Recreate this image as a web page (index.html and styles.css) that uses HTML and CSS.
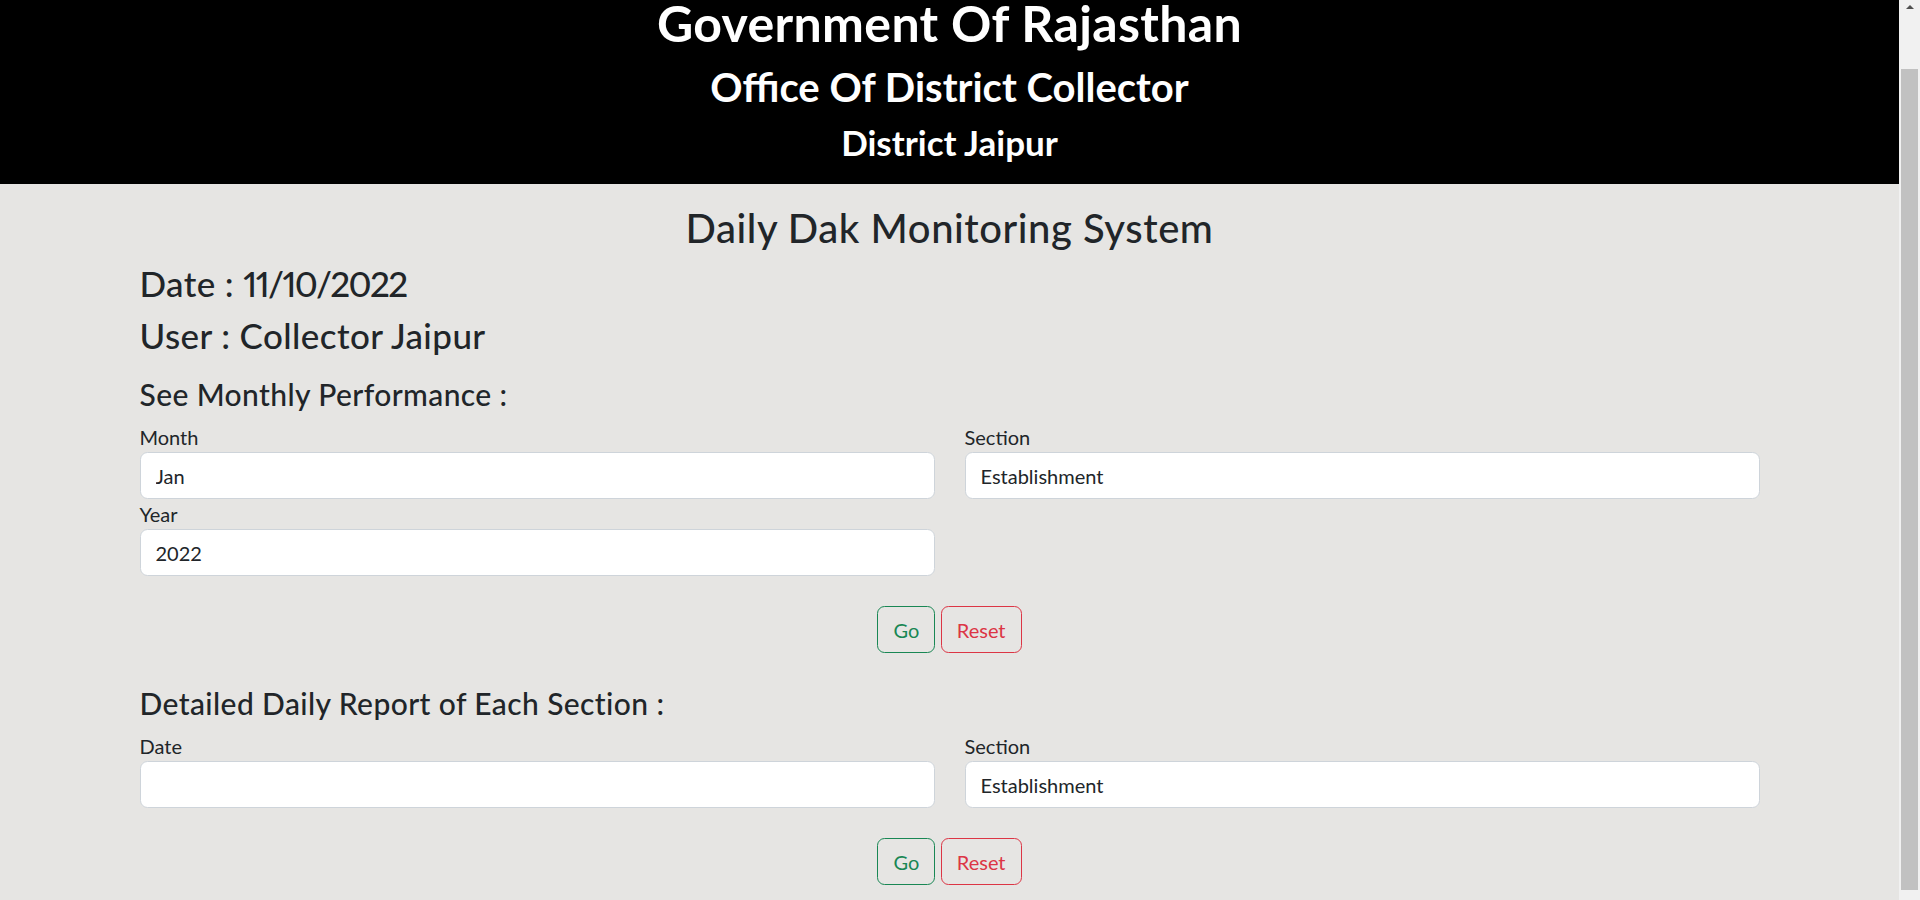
FILE: index.html
```html
<!DOCTYPE html>
<html lang="en">
<head>
<meta charset="utf-8">
<title>Daily Dak Monitoring System</title>
<link rel="stylesheet" href="styles.css">
</head>
<body>
<div class="page">
  <header class="top-banner">
    <h1 class="banner-title">Government Of Rajasthan</h1>
    <h2 class="banner-office">Office Of District Collector</h2>
    <h3 class="banner-district">District Jaipur</h3>
  </header>
  <main class="container">
    <h2 class="page-title">Daily Dak Monitoring System</h2>
    <h3 class="info-line">Date : <span class="info-date">11/10/2022</span></h3>
    <h3 class="info-line">User : Collector Jaipur</h3>

    <section class="panel panel-monthly">
      <h4 class="panel-title">See Monthly Performance :</h4>
      <div class="form-grid">
        <div class="form-col">
          <label class="field-label" for="month">Month</label>
          <input class="field-input" id="month" type="text" value="Jan">
          <label class="field-label" for="year">Year</label>
          <input class="field-input" id="year" type="text" value="2022">
        </div>
        <div class="form-col">
          <label class="field-label" for="section1">Section</label>
          <input class="field-input" id="section1" type="text" value="Establishment">
        </div>
      </div>
      <div class="actions">
        <button class="btn btn-go" type="button">Go</button>
        <button class="btn btn-reset" type="button">Reset</button>
      </div>
    </section>

    <section class="panel panel-daily">
      <h4 class="panel-title">Detailed Daily Report of Each Section :</h4>
      <div class="form-grid">
        <div class="form-col">
          <label class="field-label" for="date">Date</label>
          <input class="field-input" id="date" type="text" value="">
        </div>
        <div class="form-col">
          <label class="field-label" for="section2">Section</label>
          <input class="field-input" id="section2" type="text" value="Establishment">
        </div>
      </div>
      <div class="actions">
        <button class="btn btn-go" type="button">Go</button>
        <button class="btn btn-reset" type="button">Reset</button>
      </div>
    </section>
  </main>
</div>
<div class="scrollbar" aria-hidden="true">
  <span class="scroll-arrow"></span>
  <span class="scroll-thumb"></span>
</div>
</body>
</html>
```

FILE: styles.css
```css
html {
  background: #e6e5e3;
}

body {
  margin: 0;
  display: flex;
  align-items: stretch;
  min-height: 100vh;
  overflow: hidden;
  font-family: Lato, "Open Sans", sans-serif;
  font-size: 20px;
  line-height: 1.5;
  color: #212529;
  background: #e6e5e3;
  font-variant-numeric: proportional-nums;
}

.page {
  flex: 1 1 auto;
  min-width: 0;
}

.scrollbar {
  flex: 0 0 21px;
  box-sizing: border-box;
  display: flex;
  flex-direction: column;
  align-items: center;
  padding-top: 5px;
  background: #f1f1f1;
}

.scroll-arrow {
  display: block;
  width: 0;
  height: 0;
  border-left: 4.5px solid transparent;
  border-right: 4.5px solid transparent;
  border-bottom: 4.5px solid #505050;
}

.scroll-thumb {
  display: block;
  width: 17px;
  height: 821px;
  margin-top: 59.5px;
  background: #c1c1c1;
}

.top-banner {
  background: #000;
  color: #fff;
  text-align: center;
  font-weight: 700;
  padding-bottom: 21.5px;
}

.banner-title {
  font-size: 50px;
  line-height: 46px;
  letter-spacing: 0.35px;
  margin: 0 0 16.5px;
  font-weight: 700;
}

.banner-office {
  font-size: 40px;
  line-height: 48px;
  margin: 0 0 10px;
  font-weight: 700;
}

.banner-district {
  font-size: 35px;
  line-height: 42px;
  margin: 0;
  font-weight: 700;
}

.container {
  max-width: 1620px;
  margin: 0 auto;
  padding: 20px 15px 56px;
}

.page-title {
  font-size: 40px;
  line-height: 48px;
  letter-spacing: 0.55px;
  font-weight: 500;
  text-align: center;
  margin: 0 0 10px;
}

.info-line {
  font-size: 35px;
  line-height: 42px;
  letter-spacing: 0.4px;
  font-weight: 500;
  margin: 0 0 10px;
}

.info-date {
  letter-spacing: -1.6px;
}

.panel-monthly {
  margin-top: 20px;
}

.panel-daily {
  margin-top: 32px;
}

.panel-title {
  font-size: 30px;
  line-height: 36px;
  letter-spacing: 0.4px;
  font-weight: 500;
  margin: 0 0 10px;
}

.form-grid {
  display: grid;
  grid-template-columns: 1fr 1fr;
  column-gap: 30px;
}

.form-col {
  display: flex;
  flex-direction: column;
}

.field-label {
  display: block;
  font-size: 20px;
  line-height: 30px;
}

.field-input {
  display: block;
  box-sizing: border-box;
  width: 100%;
  height: 47px;
  margin: 0;
  padding: 7.5px 15px;
  font-family: inherit;
  font-size: 20px;
  line-height: 30px;
  color: #212529;
  background: #fff;
  border: 1px solid #ced4da;
  border-radius: 7.5px;
  outline: none;
}

.actions {
  display: flex;
  justify-content: center;
  gap: 5.5px;
  margin-top: 30px;
}

.btn {
  box-sizing: border-box;
  height: 47px;
  padding: 7.5px 15px;
  font-family: inherit;
  font-size: 20px;
  line-height: 30px;
  background: transparent;
  border: 1px solid;
  border-radius: 7.5px;
  cursor: pointer;
}

.btn-go {
  color: #198754;
  border-color: #198754;
}

.btn-reset {
  color: #dc3545;
  border-color: #dc3545;
}
```
